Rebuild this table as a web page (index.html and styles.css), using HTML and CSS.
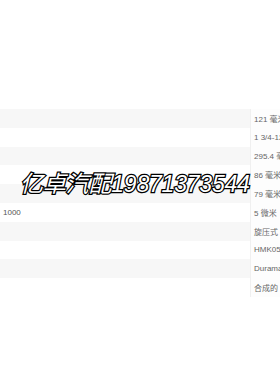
FILE: index.html
```html
<!DOCTYPE html>
<html>
<head>
<meta charset="utf-8">
<link rel="stylesheet" href="styles.css">
</head>
<body>
<div class="page">
  <div class="specs">
    <div class="row alt"><div class="key"></div><div class="val">121 毫米</div></div>
    <div class="row"><div class="key"></div><div class="val">1 3/4-12 UN</div></div>
    <div class="row alt"><div class="key"></div><div class="val">295.4 毫米</div></div>
    <div class="row"><div class="key"></div><div class="val">86 毫米</div></div>
    <div class="row alt"><div class="key"></div><div class="val">79 毫米</div></div>
    <div class="row"><div class="key">1000</div><div class="val">5 微米</div></div>
    <div class="row alt"><div class="key"></div><div class="val">旋压式</div></div>
    <div class="row"><div class="key"></div><div class="val">HMK05/2</div></div>
    <div class="row alt"><div class="key"></div><div class="val">Duramax</div></div>
    <div class="row"><div class="key"></div><div class="val">合成的</div></div>
  </div>
  <div class="watermark">亿卓汽配19871373544</div>
</div>
</body>
</html>
```
FILE: styles.css
```css
html, body {
  margin: 0;
  padding: 0;
  background: #ffffff;
}
.page {
  position: relative;
  width: 280px;
  height: 380px;
  overflow: hidden;
  padding-top: 109px;
  box-sizing: border-box;
  font-family: "Liberation Sans", "Noto Sans CJK SC", sans-serif;
}
.specs {
  display: flex;
  flex-direction: column;
}
.row {
  display: flex;
  height: 18.8px;
  align-items: center;
  font-size: 8px;
  color: #666;
}
.row.alt .key {
  background: #f7f7f7;
}
.key {
  width: 250px;
  height: 100%;
  box-sizing: border-box;
  padding-left: 3px;
  display: flex;
  align-items: center;
  color: #555;
}
.val {
  flex: 1;
  height: 100%;
  box-sizing: border-box;
  border-left: 1px solid #f0f0f0;
  padding-left: 3px;
  display: flex;
  align-items: center;
  white-space: nowrap;
  overflow: hidden;
  background: #fdfdfd;
}
.watermark {
  position: absolute;
  left: 20px;
  top: 173px;
  font-family: "Liberation Sans", "Noto Sans CJK SC", sans-serif;
  font-size: 23px;
  font-style: italic;
  font-weight: normal;
  line-height: 1;
  letter-spacing: -0.2px;
  color: #ffffff;
  -webkit-text-stroke: 2.5px #000;
  paint-order: stroke fill;
  white-space: nowrap;
}
```
